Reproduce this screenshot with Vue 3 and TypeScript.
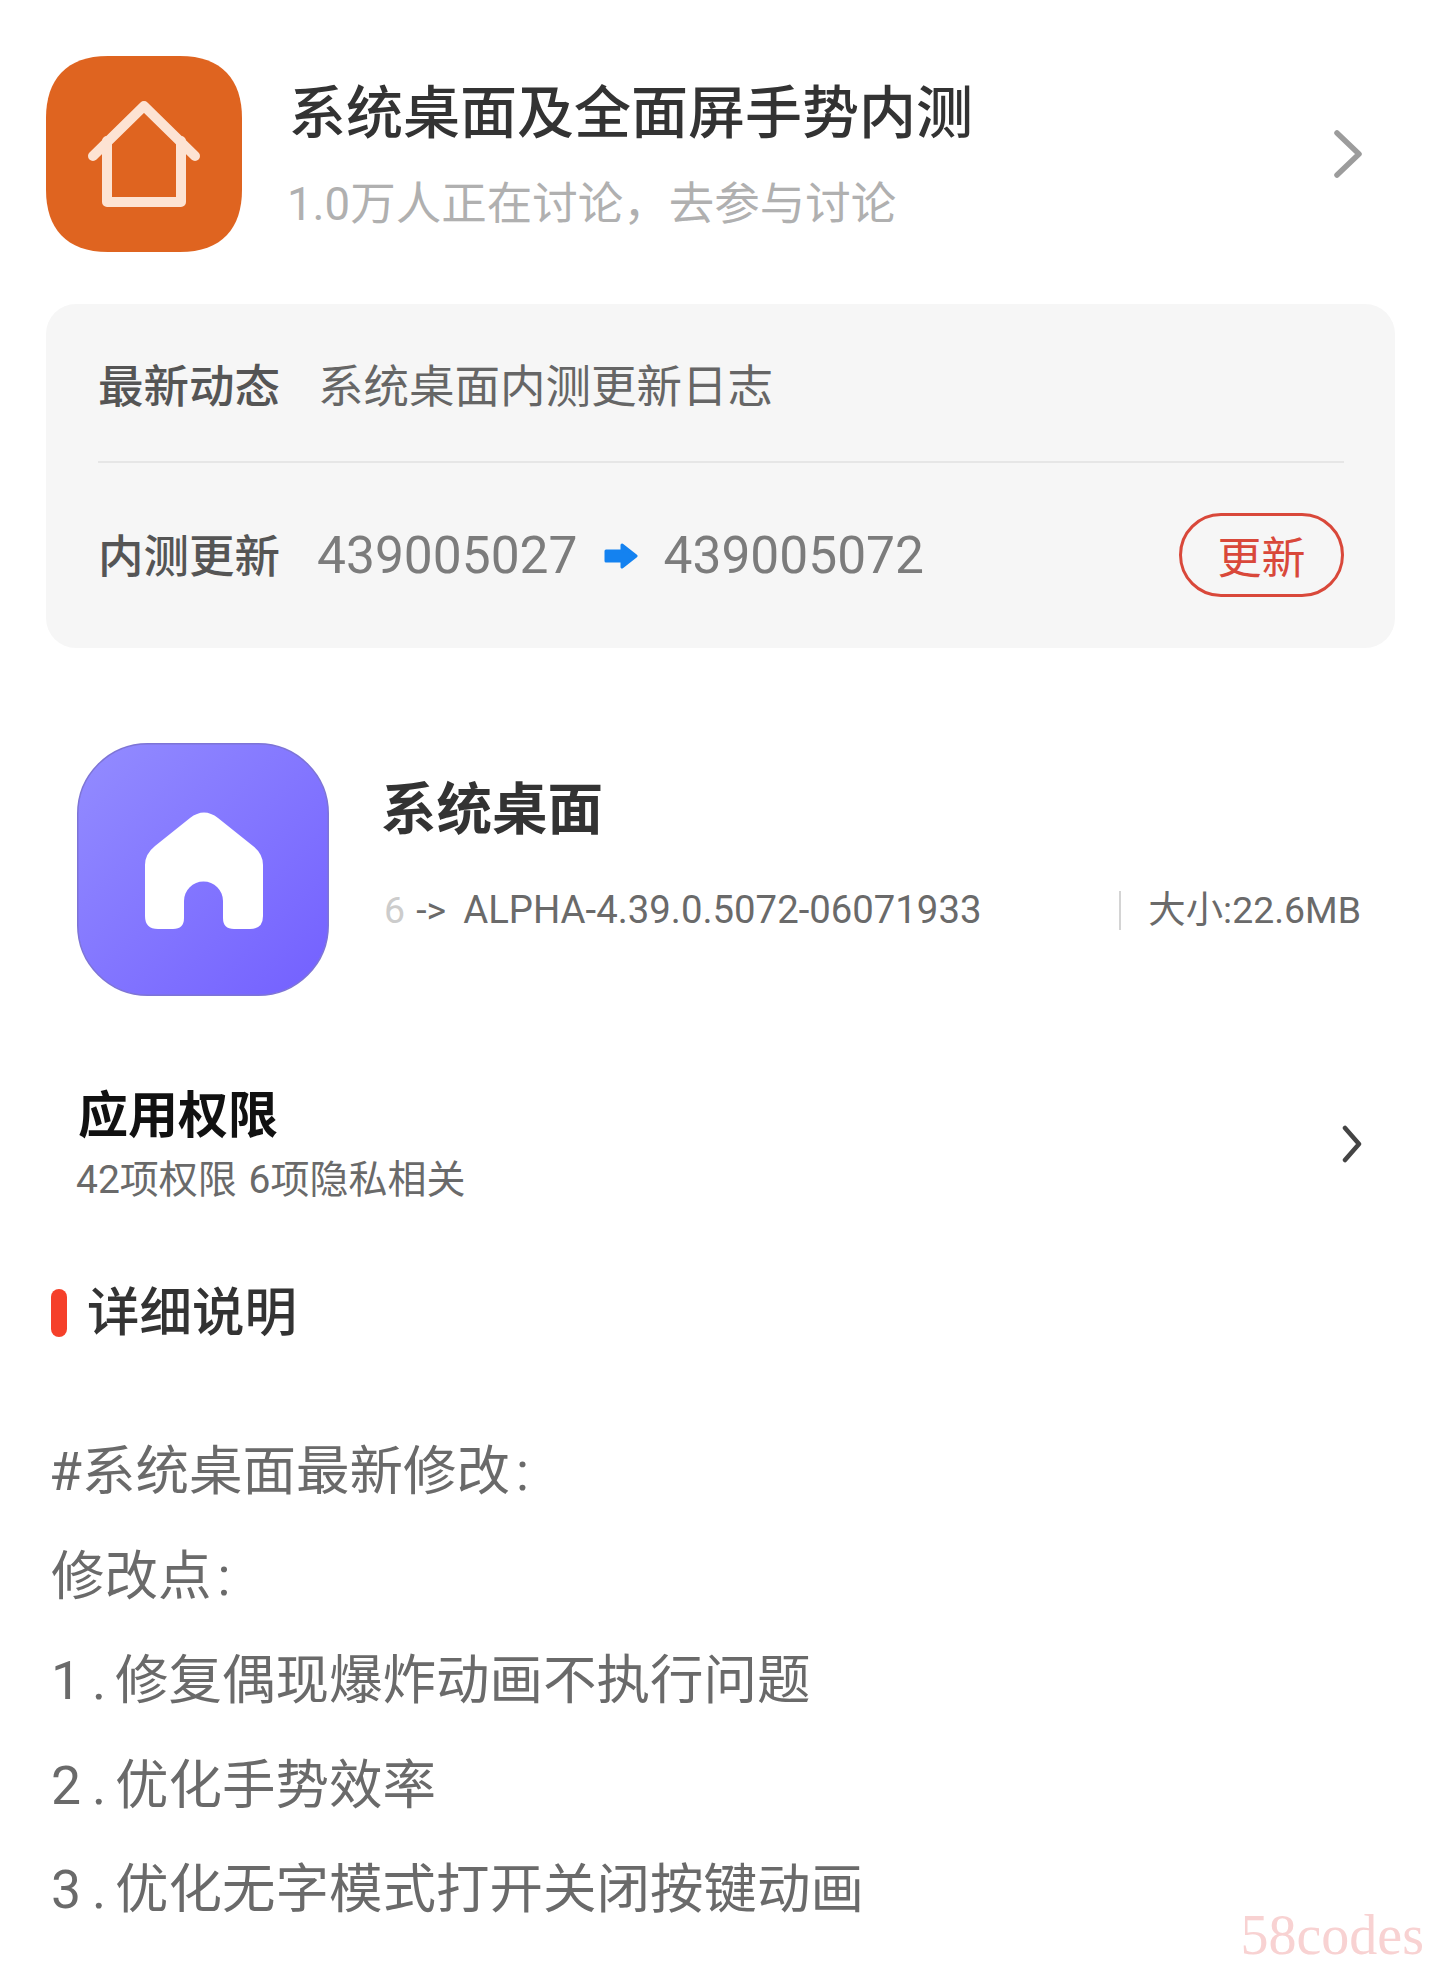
<script setup lang="ts">
// Numbered changes shown under the detail heading
const changes: { num: string; text: string }[] = [
  { num: '1.', text: '修复偶现爆炸动画不执行问题' },
  { num: '2.', text: '优化手势效率' },
  { num: '3.', text: '优化无字模式打开关闭按键动画' },
];
</script>

<template>
  <div class="page">
    <header class="topic">
      <svg class="topic-icon" width="196" height="196" viewBox="0 0 196 196" fill="none">
        <path d="M62 0H134C176 0 196 24 196 62V134C196 172 176 196 134 196H62C20 196 0 172 0 134V62C0 24 20 0 62 0Z" fill="#df6420" />
        <path d="M47 100L98 50L149 100" stroke="#fde3d3" stroke-width="10" stroke-linecap="round" stroke-linejoin="round" />
        <path d="M61 85V146H135V85" stroke="#fde3d3" stroke-width="10" stroke-linecap="round" stroke-linejoin="round" />
      </svg>
      <div class="topic-info">
        <div class="topic-title">系统桌面及全面屏手势内测</div>
        <div class="topic-desc">1.0万人正在讨论，去参与讨论</div>
      </div>
      <svg class="topic-more" width="28" height="48" viewBox="0 0 28 48" fill="none">
        <path d="M3 3L25 24L3 45" stroke="#9c9c9c" stroke-width="5.500" stroke-linecap="round" stroke-linejoin="round" />
      </svg>
    </header>

    <section class="status-card">
      <div class="status-row first">
        <span class="status-label">最新动态</span>
        <span class="status-value">系统桌面内测更新日志</span>
      </div>
      <div class="status-row second">
        <span class="status-label">内测更新</span>
        <span class="version">439005027</span>
        <svg class="version-arrow" width="34" height="26" viewBox="0 0 34 26">
          <path d="M2 8H18V2L32 13L18 24V18H2Z" fill="#1482f0" stroke="#1482f0" stroke-width="3" stroke-linejoin="round" />
        </svg>
        <span class="version">439005072</span>
        <button class="update-btn">更新</button>
      </div>
    </section>

    <section class="app-row">
      <svg class="app-icon" width="252" height="253" viewBox="0 0 252 253">
        <defs>
          <linearGradient id="appBg" x1="0" y1="0" x2="1" y2="1">
            <stop offset="0" stop-color="#938cff" />
            <stop offset="1" stop-color="#7360ff" />
          </linearGradient>
        </defs>
        <rect x="0.75" y="0.75" width="250.500" height="251.500" rx="70" fill="url(#appBg)" stroke="#7d74d6" stroke-width="1.500" />
        <path
          d="M78 103L113 75Q127 64 141 75L176 103Q186 111 186 122V173Q186 186 173 186H157Q146 186 146 175V158A19.500 19.500 0 0 0 107 158V175Q107 186 96 186H81Q68 186 68 173V122Q68 111 78 103Z"
          fill="#fff"
        />
      </svg>
      <div class="app-info">
        <div class="app-name">系统桌面</div>
        <div class="app-meta">
          <span class="app-version"><span class="cut">6</span> -&gt;<span class="build">ALPHA-4.39.0.5072-06071933</span></span>
          <span class="app-sep"></span>
          <span class="app-size">大小:22.6MB</span>
        </div>
      </div>
    </section>

    <section class="perm-row">
      <div>
        <div class="perm-title">应用权限</div>
        <div class="perm-desc">42项权限 6项隐私相关</div>
      </div>
      <svg class="perm-more" width="20" height="40" viewBox="0 0 20 40" fill="none">
        <path d="M3 4L17 20L3 36" stroke="#444" stroke-width="4.500" stroke-linecap="round" stroke-linejoin="round" />
      </svg>
    </section>

    <h2 class="detail-head"><i class="detail-mark"></i>详细说明</h2>

    <div class="notes">
      <p class="notes-first">#系统桌面最新修改<span class="colon">:</span></p>
      <p>修改点<span class="colon">:</span></p>
      <p v-for="item in changes" :key="item.num"><span class="num">{{ item.num }}</span>{{ item.text }}</p>
    </div>

    <div class="watermark">58codes</div>
  </div>
</template>

<style>
html,
body {
  margin: 0;
  background: #fff;
}
</style>

<style scoped>
.page {
  position: relative;
  width: 1440px;
  height: 1966px;
  overflow: hidden;
  background: #fff;
  font-family: Roboto, "Noto Sans CJK SC", sans-serif;
  color: #666;
}

.topic {
  display: flex;
  align-items: center;
  padding: 56px 78px 0 46px;
}

.topic-icon {
  flex-shrink: 0;
}

.topic-info {
  margin-left: 47px;
  padding-top: 2px;
}

.topic-title {
  font-size: 57px;
  line-height: 80px;
  font-weight: 500;
  color: #333;
}

.topic-desc {
  margin-top: 19px;
  margin-left: -2px;
  font-size: 45.500px;
  line-height: 64px;
  font-weight: 400;
  color: #b0b0b0;
}

.topic-more {
  margin-left: auto;
}

.status-card {
  margin: 52px 45px 0 46px;
  height: 344px;
  box-sizing: border-box;
  padding: 0 51px 0 52px;
  border-radius: 30px;
  background: #f6f6f6;
}

.status-row {
  display: flex;
  align-items: center;
}

.status-row.first {
  height: 157px;
  border-bottom: 2px solid #e6e6e6;
}

.status-row.second {
  height: 185px;
}

.status-label {
  width: 219px;
  flex-shrink: 0;
  font-size: 45.500px;
  font-weight: 500;
  color: #555;
}

.status-row.second .status-label {
  margin-bottom: 5px;
}

.status-value {
  margin-left: 1px;
  font-size: 45.500px;
  font-weight: 400;
  color: #666;
}

.version {
  font-size: 51.500px;
  font-weight: 400;
  color: #7c7c7c;
}

.version-arrow {
  margin: 0 26px;
}

.update-btn {
  margin: 0 0 2px auto;
  width: 165px;
  height: 84px;
  padding: 0;
  box-sizing: border-box;
  border: 3px solid #d9483a;
  border-radius: 42px;
  background: transparent;
  font-family: inherit;
  font-size: 44px;
  font-weight: 400;
  color: #d9483a;
}

.app-row {
  display: flex;
  margin: 95px 0 0 77px;
}

.app-icon {
  flex-shrink: 0;
}

.app-info {
  margin-left: 52px;
  width: 980px;
}

.app-name {
  margin-top: 28px;
  font-size: 55.500px;
  line-height: 80px;
  font-weight: 700;
  color: #333;
}

.app-meta {
  display: flex;
  align-items: center;
  margin: 36px 0 0 3px;
  font-size: 37.400px;
  line-height: 46px;
  font-weight: 400;
  word-spacing: 2px;
  color: #6a6a6a;
  white-space: nowrap;
}

.cut {
  color: #ccc;
}

.app-version {
  width: 740px;
}

.build {
  margin-left: 17px;
  font-size: 38.300px;
}

.app-sep {
  width: 2px;
  height: 39px;
  margin-right: 27px;
  background: #d4d4d4;
}

.perm-row {
  display: flex;
  align-items: center;
  justify-content: space-between;
  margin: 85px 78px 0 76px;
}

.perm-title {
  margin-left: 2px;
  font-size: 50px;
  line-height: 70px;
  font-weight: 700;
  color: #111;
}

.perm-desc {
  margin-top: 3px;
  font-size: 39px;
  line-height: 52px;
  font-weight: 400;
  word-spacing: 2px;
  color: #6a6a6a;
}

.detail-head {
  display: flex;
  align-items: center;
  margin: 71px 0 0 51px;
  font-size: 52.500px;
  line-height: 72px;
  font-weight: 500;
  color: #333;
}

.detail-mark {
  width: 16px;
  height: 48px;
  margin-right: 20px;
  border-radius: 8px;
  background: #f5402a;
}

.notes {
  margin: 71px 0 0 51px;
  font-size: 53.500px;
  line-height: 104.500px;
  font-weight: 400;
  color: #6a6a6a;
}

.notes p {
  margin: 0;
}

.notes .notes-first {
  text-indent: -2px;
}

.colon {
  margin-left: 6px;
}

.num {
  display: inline-block;
  width: 64px;
  letter-spacing: 11px;
}

.watermark {
  position: absolute;
  right: 16px;
  bottom: -1px;
  font-family: "Liberation Serif", serif;
  font-size: 56px;
  line-height: 64px;
  color: #f8d2d2;
}
</style>
